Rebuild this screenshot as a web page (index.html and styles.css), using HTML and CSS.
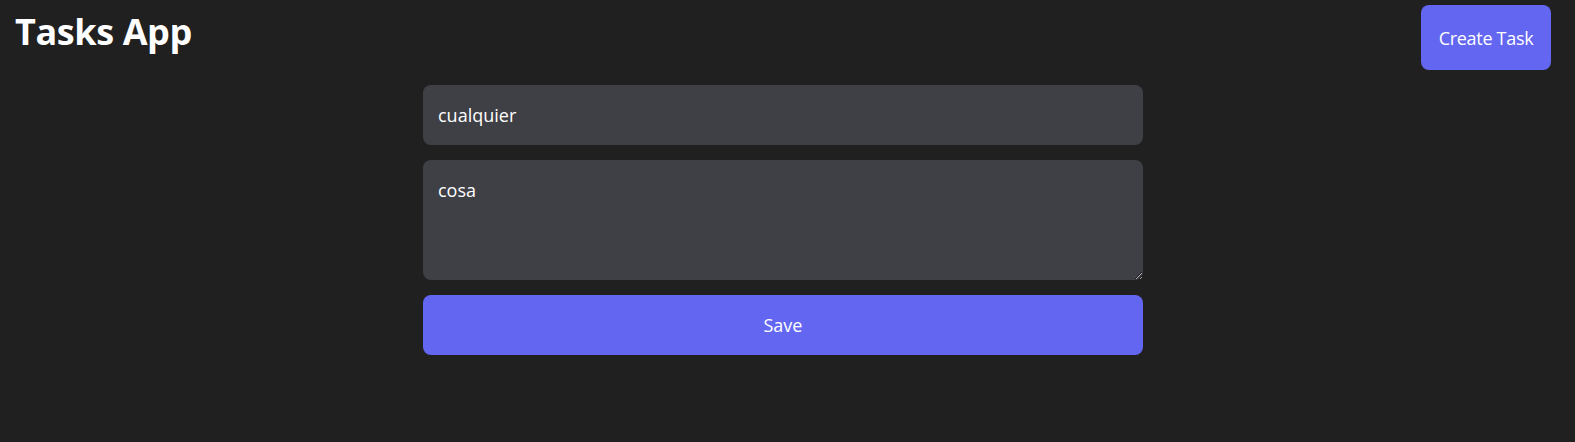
FILE: index.html
```html
<!DOCTYPE html>
<html lang="es">
<head>
<meta charset="utf-8">
<title>Tasks App</title>
<link rel="stylesheet" href="styles.css">
</head>
<body>
<header class="header">
  <h1 class="title">Tasks App</h1>
  <button class="btn create-btn">Create Task</button>
</header>
<main class="main">
  <form class="form">
    <input class="field" type="text" value="cualquier">
    <textarea class="field area">cosa</textarea>
    <button class="btn save-btn" type="button">Save</button>
  </form>
</main>
</body>
</html>
```
FILE: styles.css
```css
* { box-sizing: border-box; }
html, body { margin: 0; padding: 0; }
body {
  background: #202020;
  color: #fff;
  font-family: "Open Sans", "Noto Sans", sans-serif;
  width: 1575px;
  height: 442px;
  overflow: hidden;
}
.header {
  display: flex;
  justify-content: space-between;
  align-items: flex-start;
  padding: 5px 24px 0 15px;
}
.title {
  margin: 0;
  font-size: 36px;
  line-height: 54px;
  font-weight: 700;
  letter-spacing: -0.4px;
}
.btn {
  font-family: inherit;
  background: #6366f1;
  color: #fff;
  border: none;
  border-radius: 8px;
  font-size: 18px;
  cursor: pointer;
}
.create-btn {
  height: 65px;
  width: 130px;
  padding: 0;
  letter-spacing: -0.3px;
}
.main {
  display: flex;
  justify-content: center;
  padding-top: 15px;
  padding-right: 9px;
}
.form {
  width: 720px;
  display: flex;
  flex-direction: column;
  gap: 15px;
}
.field {
  display: block;
  width: 100%;
  height: 60px;
  background: #3f4046;
  color: #fff;
  border: none;
  border-radius: 8px;
  padding: 16px 15px;
  font-family: inherit;
  font-size: 18px;
  line-height: 28px;
  outline: none;
}
.area {
  height: 120px;
  resize: vertical;
}
.save-btn {
  height: 60px;
  width: 100%;
}
```
